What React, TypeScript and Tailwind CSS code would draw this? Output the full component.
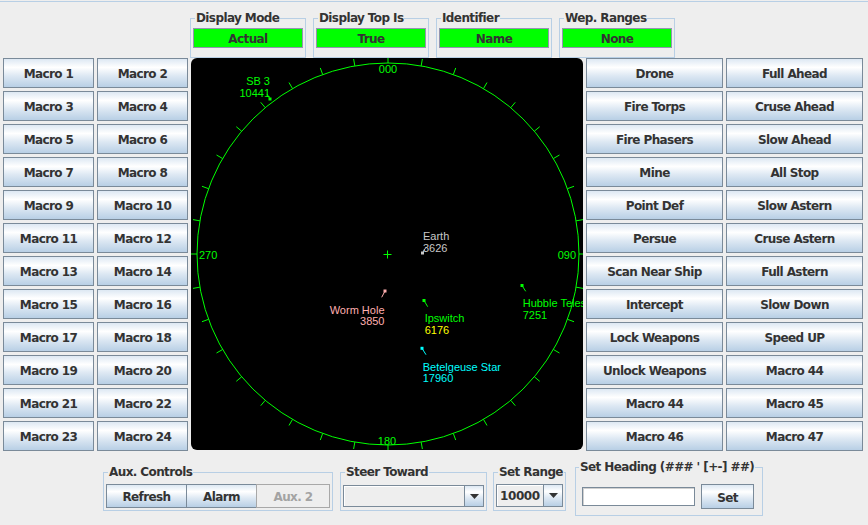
import React from "react";

const BTN =
  "flex items-center justify-center border border-[#7a8a99] bg-[linear-gradient(to_bottom,#dde8f3_0%,#ffffff_30%,#dde8f3_60%,#b8cfe5_100%)] pt-[2px] text-[12px] font-bold tracking-[-0.6px] text-[#333333] leading-none whitespace-nowrap";

const GRAD =
  "bg-[linear-gradient(to_bottom,#dde8f3_0%,#ffffff_30%,#dde8f3_60%,#b8cfe5_100%)]";

const leftLabels = Array.from({ length: 24 }, (_, i) => `Macro ${i + 1}`);
const rightLabels = [
  "Drone", "Full Ahead",
  "Fire Torps", "Cruse Ahead",
  "Fire Phasers", "Slow Ahead",
  "Mine", "All Stop",
  "Point Def", "Slow Astern",
  "Persue", "Cruse Astern",
  "Scan Near Ship", "Full Astern",
  "Intercept", "Slow Down",
  "Lock Weapons", "Speed UP",
  "Unlock Weapons", "Macro 44",
  "Macro 44", "Macro 45",
  "Macro 46", "Macro 47",
];

const topGroups = [
  ["Display Mode", "Actual"],
  ["Display Top Is", "True"],
  ["Identifier", "Name"],
  ["Wep. Ranges", "None"],
];

function Group({
  title,
  children,
  className = "",
  legendClass = "ml-[4px]",
}: {
  title: string;
  children: React.ReactNode;
  className?: string;
  legendClass?: string;
}) {
  return (
    <fieldset className={`border border-[#b8cfe5] ${className}`}>
      <legend
        className={`px-[1px] text-[12px] leading-[12px] font-bold tracking-[-0.6px] text-[#333333] whitespace-nowrap ${legendClass}`}
      >
        {title}
      </legend>
      {children}
    </fieldset>
  );
}

function Arrow() {
  return (
    <svg width="9" height="5" viewBox="0 0 9 5">
      <path d="M0 0H9L4.5 5Z" fill="#333333" />
    </svg>
  );
}

const CX = 197;
const CY = 196;
const R = 191;

type Obj = {
  mx: number; my: number; tx: number; ty: number;
  name: string; num: string; x: number; y1: number; y2: number;
  anchor: "start" | "end"; c1: string; c2: string; mc: string;
};

const objs: Obj[] = [
  { mx: 79, my: 41, tx: 76, ty: 36, name: "SB 3", num: "10441", x: 79, y1: 27, y2: 39, anchor: "end", c1: "#00ff00", c2: "#00ff00", mc: "#00ff00" },
  { mx: 231.5, my: 195, tx: 234.5, ty: 190, name: "Earth", num: "3626", x: 232, y1: 181.5, y2: 193.5, anchor: "start", c1: "#c8c8c8", c2: "#c8c8c8", mc: "#c8c8c8" },
  { mx: 194, my: 233, tx: 190.7, ty: 239.3, name: "Worm Hole", num: "3850", x: 193.5, y1: 255.5, y2: 267.3, anchor: "end", c1: "#ffafaf", c2: "#ffafaf", mc: "#ffafaf" },
  { mx: 233, my: 242.5, tx: 236.7, ty: 248.7, name: "Ipswitch", num: "6176", x: 233.7, y1: 264, y2: 275.5, anchor: "start", c1: "#00ff00", c2: "#ffff00", mc: "#00ff00" },
  { mx: 331, my: 227.5, tx: 334.7, ty: 233.3, name: "Hubble Telescope", num: "7251", x: 331.7, y1: 249, y2: 261, anchor: "start", c1: "#00ff00", c2: "#00ff00", mc: "#00ff00" },
  { mx: 231, my: 290.3, tx: 235, ty: 296.7, name: "Betelgeuse Star", num: "17960", x: 231.7, y1: 313, y2: 324, anchor: "start", c1: "#00ffff", c2: "#00ffff", mc: "#00ffff" },
];

function Radar() {
  const ticks = Array.from({ length: 36 }, (_, i) => {
    const a = (i * 10 * Math.PI) / 180;
    const s = Math.sin(a);
    const c = -Math.cos(a);
    return {
      x1: CX + R * s,
      y1: CY + R * c,
      x2: CX + (R + 7) * s,
      y2: CY + (R + 7) * c,
    };
  });
  return (
    <div className="h-[392px] w-[392px] overflow-hidden rounded-[6px] bg-black">
      <svg
        width="392"
        height="392"
        viewBox="0 0 392 392"
        className="block font-['Liberation_Sans',sans-serif] text-[11px]"
      >
        <circle cx={CX} cy={CY} r={R} fill="none" stroke="#00ff00" strokeWidth="1" />
        {ticks.map((t, i) => (
          <line key={i} x1={t.x1} y1={t.y1} x2={t.x2} y2={t.y2} stroke="#00ff00" strokeWidth="1" />
        ))}
        <line x1="192.5" y1="196.5" x2="200.5" y2="196.5" stroke="#00ff00" strokeWidth="1" />
        <line x1="196.5" y1="192.5" x2="196.5" y2="200.5" stroke="#00ff00" strokeWidth="1" />
        <text x="197" y="15" textAnchor="middle" fill="#00ff00">000</text>
        <text x="196" y="387" textAnchor="middle" fill="#00ff00">180</text>
        <text x="8" y="201" fill="#00ff00">270</text>
        <text x="385" y="201" textAnchor="end" fill="#00ff00">090</text>
        {objs.map((o, i) => (
          <g key={i}>
            <line x1={o.mx} y1={o.my} x2={o.tx} y2={o.ty} stroke={o.mc} strokeWidth="1" />
            <rect x={o.mx - 1.5} y={o.my - 1.5} width="3" height="3" fill={o.mc} />
            <text x={o.x} y={o.y1} textAnchor={o.anchor} fill={o.c1}>{o.name}</text>
            <text x={o.x} y={o.y2} textAnchor={o.anchor} fill={o.c2}>{o.num}</text>
          </g>
        ))}
      </svg>
    </div>
  );
}

export default function App() {
  return (
    <div className="flex h-[525px] w-[868px] flex-col overflow-hidden bg-[#eeeeee] font-['DejaVu_Sans',sans-serif]">
      {/* top */}
      <div className="mt-[1px] flex h-[57px] gap-[7px] border-t border-[#b8cfe5] pl-[190px] pt-[10px]">
        {topGroups.map(([t, v]) => (
          <Group key={t} title={t} className="w-[116px]">
            <div className="px-[2px] pt-[4px] pb-[1px]">
              <div className="flex h-[20px] items-center justify-center border border-[#9494b0] bg-[#00ff00] pt-[2px] text-[12px] leading-none font-bold tracking-[-0.6px] text-[#333333]">
                {v}
              </div>
            </div>
          </Group>
        ))}
      </div>

      {/* middle */}
      <div className="flex h-[393px] items-start">
        <div className="ml-[3px] grid grid-cols-[91px_91px] auto-rows-[30px] gap-[3px]">
          {leftLabels.map((l) => (
            <div key={l} className={BTN}>{l}</div>
          ))}
        </div>
        <div className="ml-[3px]">
          <Radar />
        </div>
        <div className="ml-[3px] grid grid-cols-[137px_137px] auto-rows-[30px] gap-[3px]">
          {rightLabels.map((l, i) => (
            <div key={i} className={BTN}>{l}</div>
          ))}
        </div>
      </div>

      {/* bottom */}
      <div className="flex h-[74px] items-start pl-[103px]">
        <Group title="Aux. Controls" className="mt-[15px]">
          <div className="flex px-[2px] pt-[6px] pb-[2px]">
            <div className={`${BTN} h-[24px] w-[81px]`}>Refresh</div>
            <div className={`${BTN} -ml-px h-[24px] w-[71px]`}>Alarm</div>
            <div className="-ml-px flex h-[24px] w-[74px] items-center justify-center border border-[#a8a8a8] bg-[#eeeeee] pt-[2px] text-[12px] leading-none font-bold tracking-[-0.6px] text-[#a3a3a3]">
              Aux. 2
            </div>
          </div>
        </Group>

        <Group title="Steer Toward" className="ml-[7px] mt-[15px]">
          <div className="px-[2px] pt-[7px] pb-[3px]">
            <div className="flex h-[22px] w-[141px] border border-[#7a8a99]">
              <div className="flex-1 border-r border-[#7a8a99] bg-[#eeeeee] shadow-[inset_1px_1px_0_#ffffff]" />
              <div className={`flex w-[18px] items-center justify-center ${GRAD}`}>
                <Arrow />
              </div>
            </div>
          </div>
        </Group>

        <Group title="Set Range" className="ml-[6px] mt-[15px]">
          <div className="px-[2px] pt-[6px] pb-[3px]">
            <div className="flex h-[23px] w-[67px] border border-[#7a8a99]">
              <div className="flex flex-1 items-center border-r border-[#7a8a99] bg-[#eeeeee] pl-[3px] text-[12px] font-bold tracking-[-0.4px] text-[#333333] shadow-[inset_1px_1px_0_#ffffff]">
                10000
              </div>
              <div className={`flex w-[18px] items-center justify-center ${GRAD}`}>
                <Arrow />
              </div>
            </div>
          </div>
        </Group>

        <Group title="Set Heading (### ' [+-] ##)" className="ml-[9px] mt-[10px]" legendClass="ml-[3px]">
          <div className="flex items-center pl-[6px] pr-[8px] pt-[11px] pb-[6px]">
            <div className="h-[19px] w-[113px] border border-[#7a8a99] bg-white shadow-[inset_1px_1px_0_#d0d0d0]" />
            <div className={`${BTN} ml-[6px] h-[25px] w-[53px]`}>Set</div>
          </div>
        </Group>
      </div>
    </div>
  );
}
